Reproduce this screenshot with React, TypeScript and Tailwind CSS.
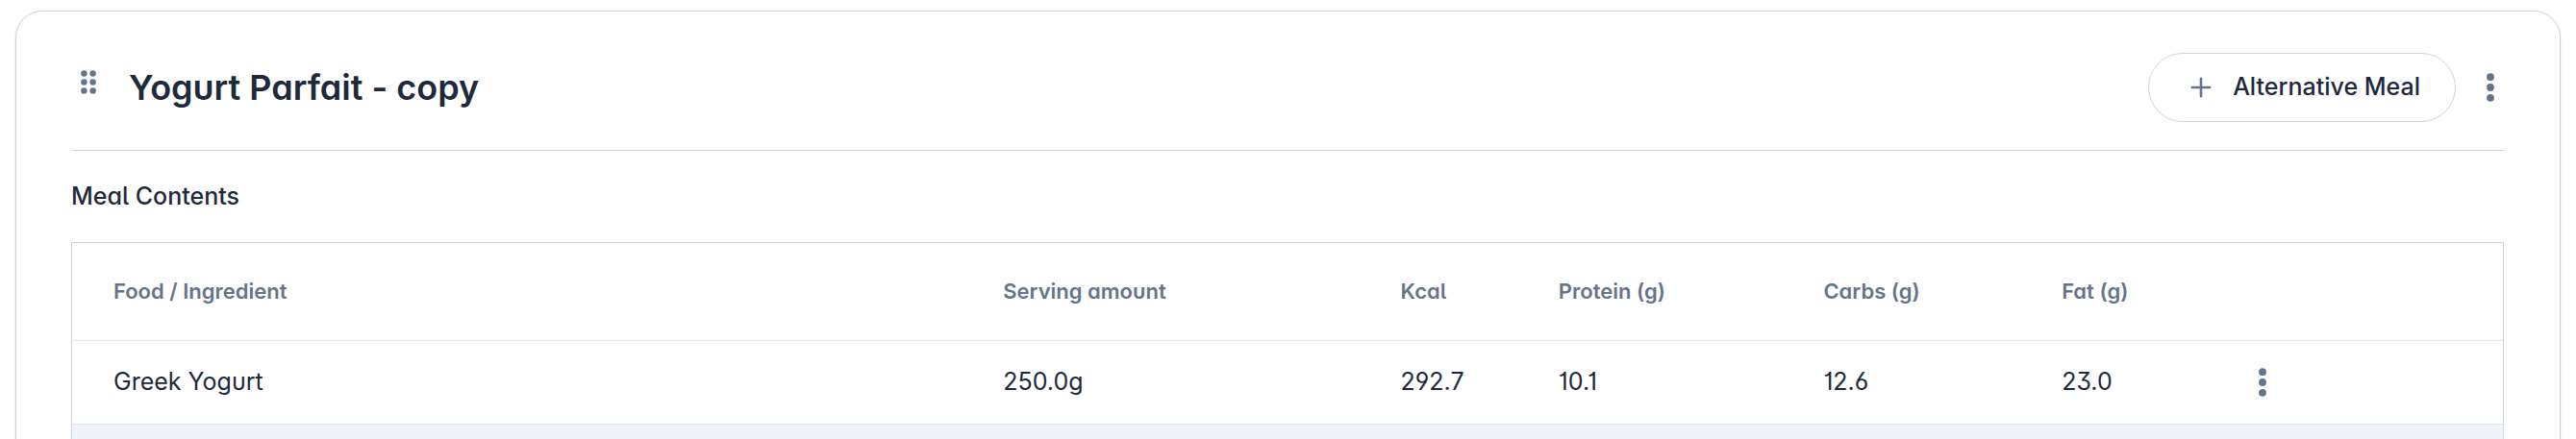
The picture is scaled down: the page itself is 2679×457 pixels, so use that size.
import React from "react";

interface FoodItem {
  name: string;
  serving: string;
  kcal: string;
  protein: string;
  carbs: string;
  fat: string;
}

interface ColumnProps {
  label: string;
  width: string;
}

const columns: ColumnProps[] = [
  { label: "Food / Ingredient", width: "w-[36.6%]" },
  { label: "Serving amount", width: "w-[16.35%]" },
  { label: "Kcal", width: "w-[6.5%]" },
  { label: "Protein (g)", width: "w-[10.9%]" },
  { label: "Carbs (g)", width: "w-[9.8%]" },
  { label: "Fat (g)", width: "w-[8.1%]" },
];

const foods: FoodItem[] = [
  {
    name: "Greek Yogurt",
    serving: "250.0g",
    kcal: "292.7",
    protein: "10.1",
    carbs: "12.6",
    fat: "23.0",
  },
];

const DragDots: React.FC = () => (
  <svg width="16" height="25" viewBox="0 0 16 25" fill="currentColor">
    {[3.5, 12.5, 21.5].map((cy) => (
      <React.Fragment key={cy}>
        <circle cx="3.4" cy={cy} r="3.2" />
        <circle cx="12.6" cy={cy} r="3.2" />
      </React.Fragment>
    ))}
  </svg>
);

const MoreDots: React.FC = () => (
  <svg width="8" height="30" viewBox="0 0 8 30" fill="currentColor">
    <circle cx="4" cy="4.2" r="3.9" />
    <circle cx="4" cy="15" r="3.9" />
    <circle cx="4" cy="25.8" r="3.9" />
  </svg>
);

const PlusIcon: React.FC = () => (
  <svg
    width="22"
    height="22"
    viewBox="0 0 22 22"
    fill="none"
    stroke="currentColor"
    strokeWidth="2.6"
    strokeLinecap="round"
  >
    <path d="M11 1.8v18.4M1.8 11h18.4" />
  </svg>
);

const MealHeader: React.FC<{ title: string }> = ({ title }) => {
  return (
    <div className="flex items-center justify-between border-b border-[#cbd5e1] pb-[29px]">
      <div className="flex items-center">
        <button
          type="button"
          aria-label="Reorder meal"
          className="cursor-grab px-2.5 pb-3 text-[#64748b]"
        >
          <DragDots />
        </button>
        <h2 className="ml-6 text-4xl font-semibold text-[#1e293b]">{title}</h2>
      </div>
      <div className="flex items-center gap-[22px]">
        <button
          type="button"
          className="flex h-18 items-center gap-[22px] rounded-full border border-[#cbd5e1] pr-9 pl-[43px] text-[25px] font-medium text-[#1e293b] [font-feature-settings:normal]"
        >
          <span className="text-[#64748b]">
            <PlusIcon />
          </span>
          Alternative Meal
        </button>
        <button
          type="button"
          aria-label="Meal options"
          className="px-2.5 text-[#64748b]"
        >
          <MoreDots />
        </button>
      </div>
    </div>
  );
};

const FoodTable: React.FC<{ items: FoodItem[] }> = ({ items }) => {
  return (
    <div className="border border-[#cbd5e1]">
      <table className="w-full table-fixed border-collapse text-left">
        <thead>
          <tr className="h-[101px] border-b border-[#e2e8f0] text-[22px] text-[#64748b]">
            {columns.map((col) => (
              <th
                key={col.label}
                scope="col"
                className={`pl-[43px] font-semibold whitespace-nowrap ${col.width}`}
              >
                {col.label}
              </th>
            ))}
            <td />
          </tr>
        </thead>
        <tbody>
          {items.map((item) => (
            <tr
              key={item.name}
              className="h-[87px] border-b border-[#e2e8f0] text-[25px] text-[#1e293b]"
            >
              <td className="pl-[43px]">{item.name}</td>
              <td className="pl-[43px]">{item.serving}</td>
              <td className="pl-[43px]">{item.kcal}</td>
              <td className="pl-[43px]">{item.protein}</td>
              <td className="pl-[43px]">{item.carbs}</td>
              <td className="pl-[43px]">{item.fat}</td>
              <td className="pl-[43px]">
                <button
                  type="button"
                  aria-label={`${item.name} options`}
                  className="block text-[#64748b]"
                >
                  <MoreDots />
                </button>
              </td>
            </tr>
          ))}
          <tr className="h-[87px] bg-[#f1f5f9]">
            <td colSpan={7} />
          </tr>
        </tbody>
      </table>
    </div>
  );
};

const App: React.FC = () => {
  return (
    <main className="h-screen overflow-hidden bg-white px-4 pt-[11px] font-['Inter',sans-serif] [font-feature-settings:'cv01','cv03','cv04','cv05','cv06','cv09','cv11']">
      <section className="rounded-[28px] border border-[#cbd5e1] bg-white pt-[43px] pr-[58px] pb-11 pl-[57px] shadow-sm">
        <MealHeader title="Yogurt Parfait - copy" />
        <h3 className="py-7 text-[25px] leading-[39px] font-medium text-[#1e293b]">
          Meal Contents
        </h3>
        <FoodTable items={foods} />
      </section>
    </main>
  );
};

export default App;
